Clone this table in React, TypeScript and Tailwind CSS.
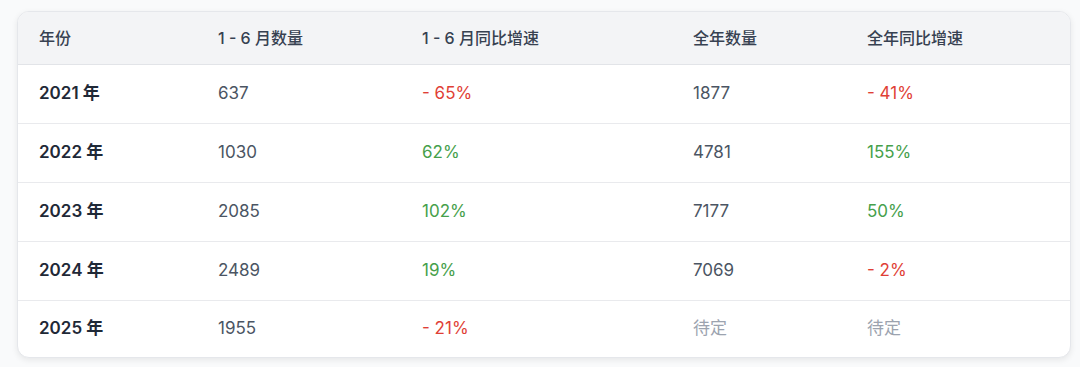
const rows = [
  { year: '2021 年', h1: '637', h1g: '- 65%', h1up: false, full: '1877', fg: '- 41%', fup: false },
  { year: '2022 年', h1: '1030', h1g: '62%', h1up: true, full: '4781', fg: '155%', fup: true },
  { year: '2023 年', h1: '2085', h1g: '102%', h1up: true, full: '7177', fg: '50%', fup: true },
  { year: '2024 年', h1: '2489', h1g: '19%', h1up: true, full: '7069', fg: '- 2%', fup: false },
  { year: '2025 年', h1: '1955', h1g: '- 21%', h1up: false, full: null, fg: null, fup: false },
]

function Growth({ value, up }: { value: string | null; up: boolean }) {
  if (value === null) return <span className="text-[#9ca3af]">待定</span>
  return <span className={up ? 'text-[#46a04b]' : 'text-[#df3f36]'}>{value}</span>
}

export default function App() {
  return (
    <div
      className="h-[367px] w-[1080px] bg-[#f9fafb] pl-[17px] pr-[9px] pt-[11px]"
      style={{ fontFamily: 'Inter, "Noto Sans CJK SC", sans-serif' }}
    >
      <div className="overflow-hidden rounded-xl border border-[#e5e7eb] bg-white shadow-[0_2px_6px_rgba(0,0,0,0.08)]">
        <table className="w-full table-fixed border-collapse text-left">
          <colgroup>
            <col className="w-[179px]" />
            <col className="w-[204px]" />
            <col className="w-[271px]" />
            <col className="w-[174px]" />
            <col />
          </colgroup>
          <thead>
            <tr className="h-[52px] border-b border-[#e2e4e8] bg-[#f3f4f6] text-[16px] text-[#374151]">
              <th className="pl-[21px] font-medium">年份</th>
              <th className="pl-[21px] font-medium">1 - 6 月数量</th>
              <th className="pl-[21px] font-medium">1 - 6 月同比增速</th>
              <th className="pl-[21px] font-medium">全年数量</th>
              <th className="pl-[21px] font-medium">全年同比增速</th>
            </tr>
          </thead>
          <tbody className="text-[17px]">
            {rows.map((r, i) => (
              <tr key={r.year} className={i < rows.length - 1 ? 'h-[59px] border-b border-[#e9eaed]' : 'h-[57px]'}>
                <td className="pl-[21px] font-semibold text-[#1f2937]">{r.year}</td>
                <td className="pl-[21px] text-[#4b5563]">{r.h1}</td>
                <td className="pl-[21px]">
                  <Growth value={r.h1g} up={r.h1up} />
                </td>
                <td className="pl-[21px] text-[#4b5563]">
                  {r.full ?? <span className="text-[#9ca3af]">待定</span>}
                </td>
                <td className="pl-[21px]">
                  <Growth value={r.fg} up={r.fup} />
                </td>
              </tr>
            ))}
          </tbody>
        </table>
      </div>
    </div>
  )
}
